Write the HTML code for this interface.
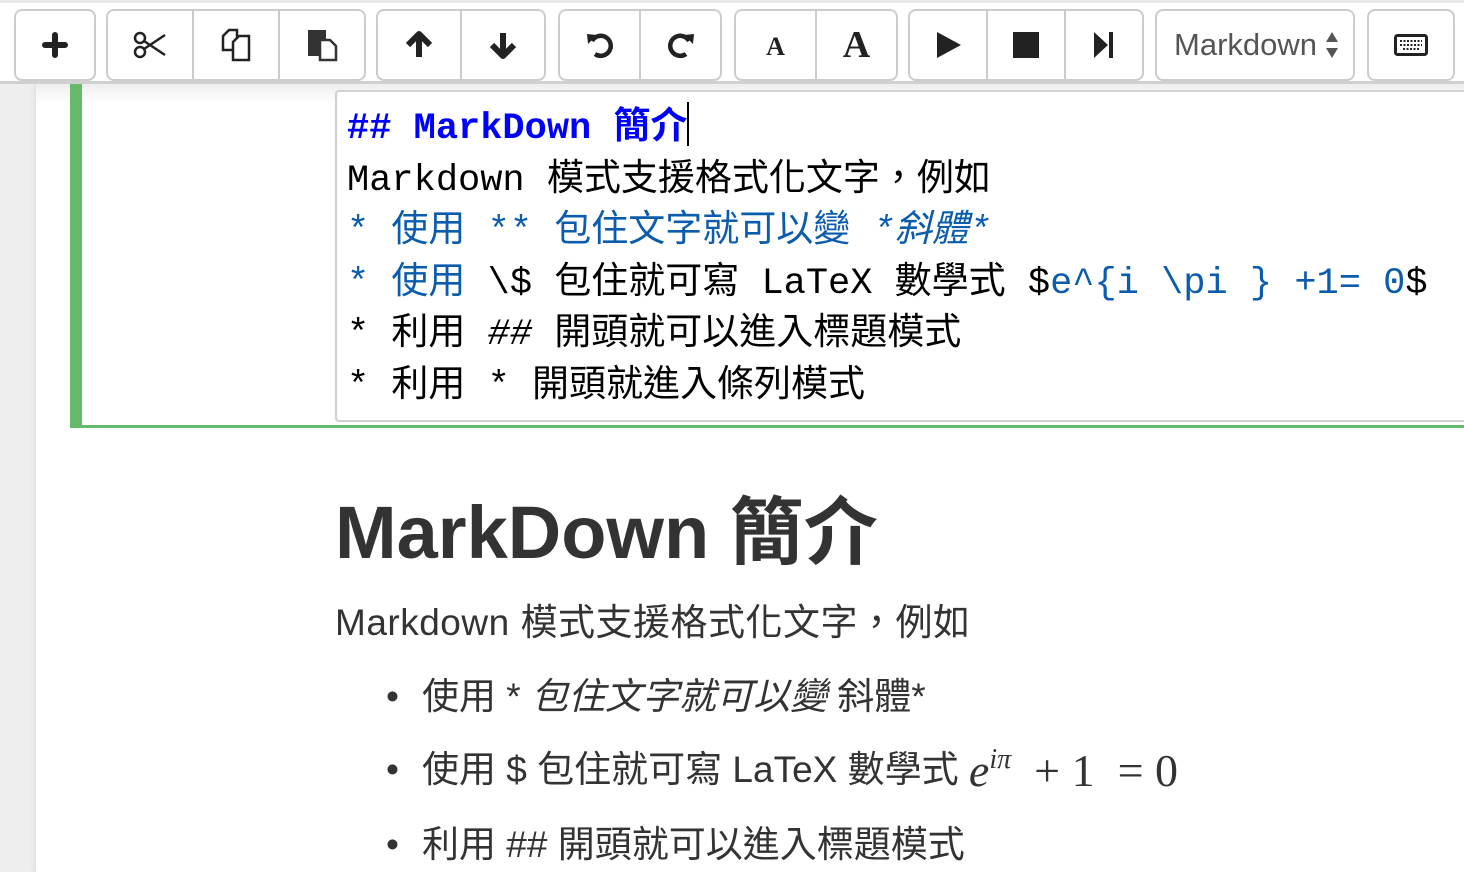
<!DOCTYPE html>
<html><head><meta charset="utf-8"><style>
*{margin:0;padding:0;box-sizing:border-box}
body{width:1464px;height:872px;overflow:hidden;background:#eee;position:relative;font-family:"Liberation Sans","Noto Sans CJK TC",sans-serif}
#tb{position:absolute;left:0;top:0;width:1464px;height:84px;background:#fff;border-top:3px solid #e8e8e8;border-bottom:3px solid #d0d0d0;z-index:2}
.g{position:absolute;top:6px;height:72px;border:2px solid #ccc;border-radius:8px;background:#fff;display:flex}
.b{flex:1;display:flex;align-items:center;justify-content:center;border-left:2px solid #ccc;color:#333}
.b:first-child{border-left:none}
#page{position:absolute;left:36px;top:84px;width:1428px;height:788px;background:#fff;box-shadow:0 0 8px rgba(0,0,0,.1)}
#sh{position:absolute;left:36px;top:84px;width:1428px;height:20px;background:linear-gradient(#eee,#fff);z-index:1}
#cell{position:absolute;left:70px;top:84px;width:1394px;height:344px;border-left:12px solid #66bb6a;border-bottom:3px solid #66bb6a;z-index:1}
#code{position:absolute;left:335px;top:90px;width:1140px;height:332px;border:2px solid #cfcfcf;border-radius:4px;background:#fff;z-index:1;padding:10px 0 0 10px;font-family:"Liberation Mono","Noto Sans CJK TC",monospace;font-size:37px;line-height:51.6px;color:#000;white-space:pre}
.h{color:#0000ff;font-weight:bold}
.bl{color:#0b5cad}
.r{position:absolute;color:#333;white-space:nowrap}
.dot{position:absolute;left:-36px;top:0}
</style></head><body>
<div id="tb">
<div class="g" style="left:14px;width:82px"><div class="b"><svg width="26" height="26" viewBox="0 0 26 26"><path d="M13 3v20M3 13h20" stroke="#222" stroke-width="6" stroke-linecap="round"/></svg></div></div>
<div class="g" style="left:106px;width:260px"><div class="b"><svg width="34" height="28" viewBox="0 0 34 28"><circle cx="7" cy="7" r="5" fill="none" stroke="#222" stroke-width="2.5"/><circle cx="7" cy="21" r="5" fill="none" stroke="#222" stroke-width="2.5"/><path d="M11 10L32 24M11 18L32 4" stroke="#222" stroke-width="2.5"/></svg></div><div class="b"><svg width="32" height="34" viewBox="0 0 32 34"><path d="M3 8l6-6h8v20H3z" fill="none" stroke="#222" stroke-width="2.5"/><path d="M13 14l6-6h10v24H13z" fill="#fff" stroke="#222" stroke-width="2.5"/></svg></div><div class="b"><svg width="32" height="34" viewBox="0 0 32 34"><rect x="2" y="2" width="18" height="26" fill="#333"/><path d="M14 12h10l6 6v14H14z" fill="#fff" stroke="#333" stroke-width="2.5"/></svg></div></div>
<div class="g" style="left:376px;width:170px"><div class="b"><svg width="30" height="30" viewBox="0 0 30 30"><path d="M15 27V6M4 15L15 4l11 11" stroke="#222" stroke-width="6" fill="none" stroke-linejoin="round"/></svg></div><div class="b"><svg width="30" height="30" viewBox="0 0 30 30"><path d="M15 3v21M4 15l11 11 11-11" stroke="#222" stroke-width="6" fill="none" stroke-linejoin="round"/></svg></div></div>
<div class="g" style="left:558px;width:164px"><div class="b"><svg width="30" height="30" viewBox="0 0 30 30"><path d="M7 11A10 10 0 1 1 10 24" stroke="#222" stroke-width="4.5" fill="none"/><path d="M2 4l10 1-9 9z" fill="#222"/></svg></div><div class="b"><svg width="30" height="30" viewBox="0 0 30 30"><path d="M23 11A10 10 0 1 0 20 24" stroke="#222" stroke-width="4.5" fill="none"/><path d="M28 4l-10 1 9 9z" fill="#222"/></svg></div></div>
<div class="g" style="left:734px;width:164px"><div class="b" style="font-family:'Liberation Serif',serif;font-size:26px;font-weight:bold;color:#222;padding-top:4px">A</div><div class="b" style="font-family:'Liberation Serif',serif;font-size:38px;font-weight:bold;color:#222">A</div></div>
<div class="g" style="left:908px;width:236px"><div class="b"><svg width="28" height="28" viewBox="0 0 28 28"><path d="M3 1l24 13L3 27z" fill="#222"/></svg></div><div class="b"><svg width="28" height="28" viewBox="0 0 28 28"><rect x="1" y="1" width="26" height="26" fill="#222"/></svg></div><div class="b"><svg width="22" height="28" viewBox="0 0 22 28"><path d="M1 1l14 13L1 27z" fill="#222"/><rect x="16" y="1" width="4" height="26" fill="#222"/></svg></div></div>
<div class="g" style="left:1155px;width:200px;align-items:center;padding-left:17px;font-size:31px;color:#555">Markdown<svg style="margin-left:8px" width="14" height="28" viewBox="0 0 14 28"><path d="M7 1l6 10H1zM7 27l6-10H1z" fill="#555"/></svg></div>
<div class="g" style="left:1367px;width:88px"><div class="b"><svg width="34" height="22" viewBox="0 0 34 22"><rect x="1.5" y="1.5" width="31" height="19" rx="2" fill="none" stroke="#222" stroke-width="3"/><path d="M6 7h22M6 11h22M9 15h16" stroke="#222" stroke-width="2" stroke-dasharray="2 1.5"/></svg></div></div>
</div>
<div id="page"></div><div id="sh"></div>
<div id="cell"></div>
<div id="code"><span class="h">## MarkDown 簡介</span><span style="display:inline-block;width:2px;height:44px;background:#000;vertical-align:-8px"></span>
Markdown 模式支援格式化文字，例如
<span class="bl">* 使用 ** 包住文字就可以變 <i>*斜體*</i></span>
<span class="bl">* 使用 </span>\$ 包住就可寫 LaTeX 數學式 $<span class="bl">e^{i \pi } +1= 0</span>$
* 利用 <i>##</i> 開頭就可以進入標題模式
* 利用 * 開頭就進入條列模式</div>
<div class="r" style="left:335px;top:487px;font-size:74px;font-weight:bold;line-height:92px">MarkDown 簡介</div>
<div class="r" style="left:335px;top:600px;font-size:37px;line-height:46px;letter-spacing:0.5px">Markdown 模式支援格式化文字，例如</div>
<div class="r" style="left:422px;top:674px;font-size:37px;line-height:46px"><span class="dot">•</span>使用 * <i>包住文字就可以變</i> 斜體*</div>
<div class="r" style="left:422px;top:747px;font-size:37px;line-height:46px;height:46px"><span class="dot">•</span>使用 $ 包住就可寫 LaTeX 數學式 <span style="font-family:'Liberation Serif',serif;font-size:46px;line-height:40px;display:inline-block;vertical-align:-4px"><i>e</i><span style="font-size:28px;position:relative;top:-18px"><i>iπ</i></span>&nbsp;&nbsp;+&nbsp;1&nbsp;&nbsp;=&nbsp;0</span></div>
<div class="r" style="left:422px;top:822px;font-size:37px;line-height:46px"><span class="dot">•</span>利用 ## 開頭就可以進入標題模式</div>
</body></html>
